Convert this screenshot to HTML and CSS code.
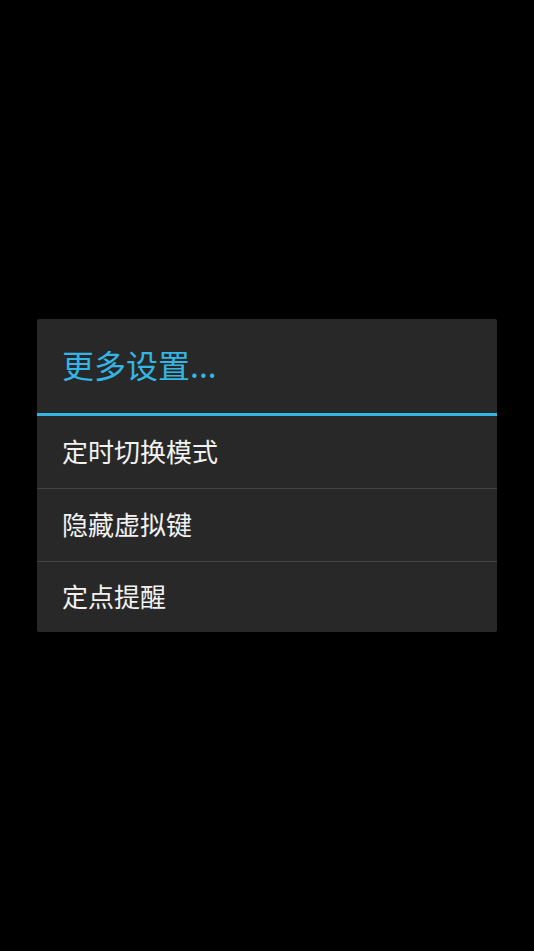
FILE: index.html
```html
<!DOCTYPE html>
<html lang="zh-CN">
<head>
<meta charset="utf-8">
<link rel="stylesheet" href="styles.css">
</head>
<body>
<div class="screen">
  <div class="dialog">
    <div class="title">更多设置...</div>
    <div class="divider"></div>
    <div class="item">定时切换模式</div>
    <div class="sep"></div>
    <div class="item">隐藏虚拟键</div>
    <div class="sep"></div>
    <div class="item last">定点提醒</div>
  </div>
</div>
</body>
</html>
```
FILE: styles.css
```css
html, body {
  margin: 0;
  padding: 0;
  background: #000;
}
.screen {
  width: 534px;
  height: 951px;
  display: flex;
  align-items: center;
  justify-content: center;
}
.dialog {
  width: 460px;
  background: #282828;
  border-radius: 2px;
  display: flex;
  flex-direction: column;
  font-family: "Noto Sans CJK SC", "Noto Sans", sans-serif;
}
.title {
  height: 94px;
  box-sizing: border-box;
  padding-bottom: 4px;
  display: flex;
  align-items: center;
  padding-left: 25px;
  color: #33b5e5;
  font-size: 32px;
}
.divider {
  height: 3px;
  background: #33b5e5;
}
.item {
  height: 72px;
  box-sizing: border-box;
  padding-bottom: 4px;
  display: flex;
  align-items: center;
  padding-left: 25px;
  color: #f2f2f2;
  font-size: 26px;
}
.item.last {
  height: 70px;
}
.sep {
  height: 1px;
  background: #444444;
}
```
